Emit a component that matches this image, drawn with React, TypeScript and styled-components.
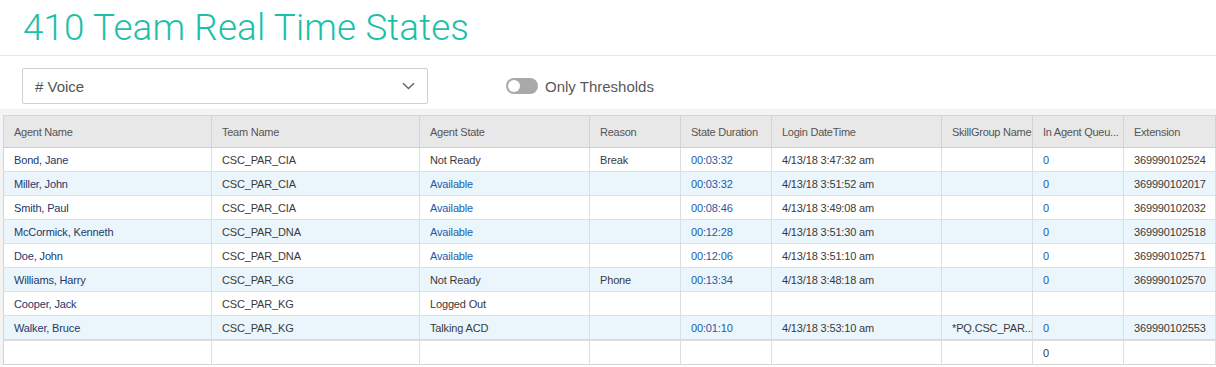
import styled, { createGlobalStyle } from 'styled-components';

const GlobalStyle = createGlobalStyle`
  html, body {
    margin: 0;
    padding: 0;
    background: #fff;
    font-family: "Liberation Sans", Arial, sans-serif;
  }
`;

const Page = styled.div`
  width: 1216px;
  height: 367px;
  overflow: hidden;
  background: #fff;
`;

const Header = styled.div`
  height: 56px;
  padding: 0 23px;
  border-bottom: 1px solid #e6e6e6;
  box-sizing: border-box;
  display: flex;
  align-items: center;
`;

const Title = styled.h1`
  margin: 0;
  font-family: Roboto, "Liberation Sans", sans-serif;
  font-weight: 300;
  font-size: 36.8px;
  line-height: 44px;
  color: #1ebfa9;
  letter-spacing: 0.15px;
`;

const Toolbar = styled.div`
  display: flex;
  align-items: center;
  padding: 12px 22px 5px;
`;

const Select = styled.div`
  width: 406px;
  height: 36px;
  box-sizing: border-box;
  border: 1px solid #cfcfcf;
  border-radius: 2px;
  display: flex;
  align-items: center;
  justify-content: space-between;
  padding: 0 12px 0 12px;
  font-size: 15px;
  color: #555;
`;

const Toggle = styled.div`
  display: flex;
  align-items: center;
  gap: 7px;
  margin-left: 78px;
  font-size: 15px;
  color: #58595b;
`;

const Track = styled.span<{ $on?: boolean }>`
  width: 32px;
  height: 16px;
  border-radius: 8px;
  background: ${p => (p.$on ? '#1ebfa9' : '#a9a9a9')};
  position: relative;
  display: inline-block;

  &::after {
    content: '';
    position: absolute;
    top: 2px;
    left: ${p => (p.$on ? '18px' : '2px')};
    width: 12px;
    height: 12px;
    border-radius: 50%;
    background: #fff;
  }
`;

const TableArea = styled.div`
  background: #f4f4f4;
  padding: 6px 0 0 3px;
`;

const Table = styled.table`
  width: 1212px;
  table-layout: fixed;
  border-collapse: collapse;
  font-size: 11px;
  letter-spacing: -0.15px;
  background: #fff;
  border-left: 1px solid #d4d4d4;
`;

const Th = styled.th`
  height: 32px;
  box-sizing: border-box;
  background: #e8e8e8;
  color: #555;
  font-weight: normal;
  text-align: left;
  padding: 0 0 0 10px;
  letter-spacing: -0.25px;
  border-top: 1px solid #d6d6d6;
  border-bottom: 1px solid #cfcfcf;
  border-right: 1px solid #d4d4d4;
  white-space: nowrap;
  overflow: hidden;
`;

const Tr = styled.tr<{ $striped?: boolean; $total?: boolean }>`
  background: ${p => (p.$striped ? '#ebf6fc' : '#fff')};
  border-bottom: 1px solid #e0e0e0;
  ${p => p.$total && 'border-top: 2px solid #dcdcdc; border-bottom: 1px solid #d4d4d4;'}
`;

const Td = styled.td<{ $tone?: 'name' | 'blue' | 'dark' }>`
  height: 23px;
  padding: 0 2px 0 10px;
  border-right: 1px solid #dedede;
  white-space: nowrap;
  overflow: hidden;
  color: ${p => (p.$tone === 'name' ? '#23386b' : p.$tone === 'blue' ? '#1f5aa6' : '#3a3a3a')};
`;

const widths = [208, 208, 170, 91, 91, 170, 91, 91, 92];

const headers = [
  'Agent Name',
  'Team Name',
  'Agent State',
  'Reason',
  'State Duration',
  'Login DateTime',
  'SkillGroup Name',
  'In Agent Queu...',
  'Extension',
];

type Agent = {
  name: string;
  team: string;
  state: string;
  reason: string;
  duration: string;
  login: string;
  skill: string;
  queue: string;
  ext: string;
};

const agents: Agent[] = [
  { name: 'Bond, Jane', team: 'CSC_PAR_CIA', state: 'Not Ready', reason: 'Break', duration: '00:03:32', login: '4/13/18 3:47:32 am', skill: '', queue: '0', ext: '369990102524' },
  { name: 'Miller, John', team: 'CSC_PAR_CIA', state: 'Available', reason: '', duration: '00:03:32', login: '4/13/18 3:51:52 am', skill: '', queue: '0', ext: '369990102017' },
  { name: 'Smith, Paul', team: 'CSC_PAR_CIA', state: 'Available', reason: '', duration: '00:08:46', login: '4/13/18 3:49:08 am', skill: '', queue: '0', ext: '369990102032' },
  { name: 'McCormick, Kenneth', team: 'CSC_PAR_DNA', state: 'Available', reason: '', duration: '00:12:28', login: '4/13/18 3:51:30 am', skill: '', queue: '0', ext: '369990102518' },
  { name: 'Doe, John', team: 'CSC_PAR_DNA', state: 'Available', reason: '', duration: '00:12:06', login: '4/13/18 3:51:10 am', skill: '', queue: '0', ext: '369990102571' },
  { name: 'Williams, Harry', team: 'CSC_PAR_KG', state: 'Not Ready', reason: 'Phone', duration: '00:13:34', login: '4/13/18 3:48:18 am', skill: '', queue: '0', ext: '369990102570' },
  { name: 'Cooper, Jack', team: 'CSC_PAR_KG', state: 'Logged Out', reason: '', duration: '', login: '', skill: '', queue: '', ext: '' },
  { name: 'Walker, Bruce', team: 'CSC_PAR_KG', state: 'Talking ACD', reason: '', duration: '00:01:10', login: '4/13/18 3:53:10 am', skill: '*PQ.CSC_PAR...', queue: '0', ext: '369990102553' },
];

const Chevron = () => (
  <svg width="13" height="8" viewBox="0 0 13 8" fill="none">
    <path d="M1 1.2l5.5 5.3 5.5-5.3" stroke="#666" strokeWidth="1.5" />
  </svg>
);

const App = () => {
  return (
    <Page>
      <GlobalStyle />
      <Header>
        <Title>410 Team Real Time States</Title>
      </Header>
      <Toolbar>
        <Select>
          <span># Voice</span>
          <Chevron />
        </Select>
        <Toggle>
          <Track />
          <span>Only Thresholds</span>
        </Toggle>
      </Toolbar>
      <TableArea>
        <Table>
          <colgroup>
            {widths.map((w, i) => (
              <col key={i} style={{ width: w }} />
            ))}
          </colgroup>
          <thead>
            <tr>
              {headers.map(h => (
                <Th key={h}>{h}</Th>
              ))}
            </tr>
          </thead>
          <tbody>
            {agents.map((a, i) => (
              <Tr key={a.name} $striped={i % 2 === 1}>
                <Td $tone="name">{a.name}</Td>
                <Td>{a.team}</Td>
                <Td $tone={a.state === 'Available' ? 'blue' : 'dark'}>{a.state}</Td>
                <Td>{a.reason}</Td>
                <Td $tone="blue">{a.duration}</Td>
                <Td>{a.login}</Td>
                <Td>{a.skill}</Td>
                <Td $tone="blue">{a.queue}</Td>
                <Td>{a.ext}</Td>
              </Tr>
            ))}
            <Tr $total>
              <Td />
              <Td />
              <Td />
              <Td />
              <Td />
              <Td />
              <Td />
              <Td $tone="dark">0</Td>
              <Td />
            </Tr>
          </tbody>
        </Table>
      </TableArea>
    </Page>
  );
};

export default App;
